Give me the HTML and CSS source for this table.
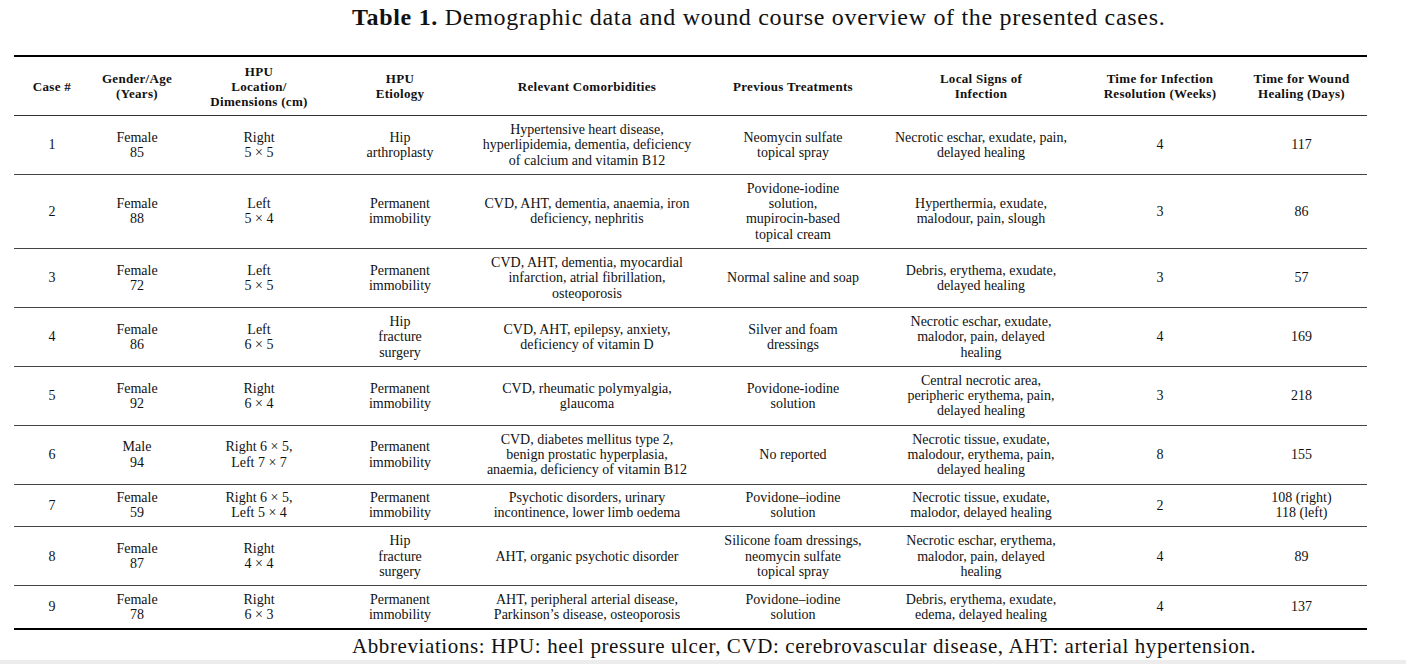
FILE: index.html
```html
<!DOCTYPE html>
<html>
<head>
<meta charset="utf-8">
<link rel="stylesheet" href="styles.css">
</head>
<body>
<div class="page">
  <p class="caption"><b>Table 1.</b> Demographic data and wound course overview of the presented cases.</p>
  <table class="data">
    <colgroup>
      <col class="c1"><col class="c2"><col class="c3"><col class="c4"><col class="c5"><col class="c6"><col class="c7"><col class="c8"><col class="c9">
    </colgroup>
    <thead>
      <tr>
        <th>Case #</th>
        <th>Gender/Age<br>(Years)</th>
        <th>HPU<br>Location/<br>Dimensions (cm)</th>
        <th>HPU<br>Etiology</th>
        <th>Relevant Comorbidities</th>
        <th>Previous Treatments</th>
        <th>Local Signs of<br>Infection</th>
        <th>Time for Infection<br>Resolution (Weeks)</th>
        <th>Time for Wound<br>Healing (Days)</th>
      </tr>
    </thead>
    <tbody>
      <tr>
        <td>1</td><td>Female<br>85</td><td>Right<br>5 × 5</td><td>Hip<br>arthroplasty</td>
        <td>Hypertensive heart disease,<br>hyperlipidemia, dementia, deficiency<br>of calcium and vitamin B12</td>
        <td>Neomycin sulfate<br>topical spray</td>
        <td>Necrotic eschar, exudate, pain,<br>delayed healing</td><td>4</td><td>117</td>
      </tr>
      <tr>
        <td>2</td><td>Female<br>88</td><td>Left<br>5 × 4</td><td>Permanent<br>immobility</td>
        <td>CVD, AHT, dementia, anaemia, iron<br>deficiency, nephritis</td>
        <td>Povidone-iodine<br>solution,<br>mupirocin-based<br>topical cream</td>
        <td>Hyperthermia, exudate,<br>malodour, pain, slough</td><td>3</td><td>86</td>
      </tr>
      <tr>
        <td>3</td><td>Female<br>72</td><td>Left<br>5 × 5</td><td>Permanent<br>immobility</td>
        <td>CVD, AHT, dementia, myocardial<br>infarction, atrial fibrillation,<br>osteoporosis</td>
        <td>Normal saline and soap</td>
        <td>Debris, erythema, exudate,<br>delayed healing</td><td>3</td><td>57</td>
      </tr>
      <tr>
        <td>4</td><td>Female<br>86</td><td>Left<br>6 × 5</td><td>Hip<br>fracture<br>surgery</td>
        <td>CVD, AHT, epilepsy, anxiety,<br>deficiency of vitamin D</td>
        <td>Silver and foam<br>dressings</td>
        <td>Necrotic eschar, exudate,<br>malodor, pain, delayed<br>healing</td><td>4</td><td>169</td>
      </tr>
      <tr>
        <td>5</td><td>Female<br>92</td><td>Right<br>6 × 4</td><td>Permanent<br>immobility</td>
        <td>CVD, rheumatic polymyalgia,<br>glaucoma</td>
        <td>Povidone-iodine<br>solution</td>
        <td>Central necrotic area,<br>peripheric erythema, pain,<br>delayed healing</td><td>3</td><td>218</td>
      </tr>
      <tr>
        <td>6</td><td>Male<br>94</td><td>Right 6 × 5,<br>Left 7 × 7</td><td>Permanent<br>immobility</td>
        <td>CVD, diabetes mellitus type 2,<br>benign prostatic hyperplasia,<br>anaemia, deficiency of vitamin B12</td>
        <td>No reported</td>
        <td>Necrotic tissue, exudate,<br>malodour, erythema, pain,<br>delayed healing</td><td>8</td><td>155</td>
      </tr>
      <tr class="short">
        <td>7</td><td>Female<br>59</td><td>Right 6 × 5,<br>Left 5 × 4</td><td>Permanent<br>immobility</td>
        <td>Psychotic disorders, urinary<br>incontinence, lower limb oedema</td>
        <td>Povidone–iodine<br>solution</td>
        <td>Necrotic tissue, exudate,<br>malodor, delayed healing</td><td>2</td><td>108 (right)<br>118 (left)</td>
      </tr>
      <tr>
        <td>8</td><td>Female<br>87</td><td>Right<br>4 × 4</td><td>Hip<br>fracture<br>surgery</td>
        <td>AHT, organic psychotic disorder</td>
        <td>Silicone foam dressings,<br>neomycin sulfate<br>topical spray</td>
        <td>Necrotic eschar, erythema,<br>malodor, pain, delayed<br>healing</td><td>4</td><td>89</td>
      </tr>
      <tr class="last">
        <td>9</td><td>Female<br>78</td><td>Right<br>6 × 3</td><td>Permanent<br>immobility</td>
        <td>AHT, peripheral arterial disease,<br>Parkinson’s disease, osteoporosis</td>
        <td>Povidone–iodine<br>solution</td>
        <td>Debris, erythema, exudate,<br>edema, delayed healing</td><td>4</td><td>137</td>
      </tr>
    </tbody>
  </table>
  <p class="note">Abbreviations: HPU: heel pressure ulcer, CVD: cerebrovascular disease, AHT: arterial hypertension.</p>
</div>
<div class="strip"></div>
</body>
</html>
```
FILE: styles.css
```css
html, body {
  margin: 0;
  padding: 0;
  background: #fff;
}
body {
  font-family: "Liberation Serif", "Times New Roman", serif;
  color: #111;
  height: 664px;
  overflow: hidden;
  display: flex;
  flex-direction: column;
}
.page {
  flex: 1;
}
.caption {
  margin: 0;
  padding: 3px 0 0 352px;
  font-size: 24px;
  letter-spacing: 0.7px;
  line-height: 28px;
  height: 55px;
  box-sizing: border-box;
}
.data {
  margin-left: 14px;
  width: 1353px;
  table-layout: fixed;
  border-collapse: collapse;
  border-top: 2px solid #000;
  border-bottom: 2px solid #000;
}
.c1 { width: 76px; }
.c2 { width: 94px; }
.c3 { width: 150px; }
.c4 { width: 132px; }
.c5 { width: 242px; }
.c6 { width: 170px; }
.c7 { width: 206px; }
.c8 { width: 152px; }
.c9 { width: 131px; }
.data th {
  font-size: 13px;
  letter-spacing: 0.3px;
  font-weight: bold;
  line-height: 15px;
  height: 58px;
  padding: 0;
  text-align: center;
  vertical-align: middle;
  border-bottom: 1px solid #333;
}
.data td {
  font-size: 14px;
  line-height: 15.3px;
  padding: 6px 2px;
  text-align: center;
  vertical-align: middle;
  border-bottom: 1px solid #444;
}
.data tr.short td {
  padding: 5.5px 2px;
}
.data tr.last td {
  border-bottom: none;
  padding: 5.5px 2px;
}
.note {
  margin: 0;
  padding: 4px 0 0 352px;
  font-size: 21px;
  letter-spacing: 0.6px;
  line-height: 24px;
}
.strip {
  height: 4px;
  background: #ececec;
}
```
